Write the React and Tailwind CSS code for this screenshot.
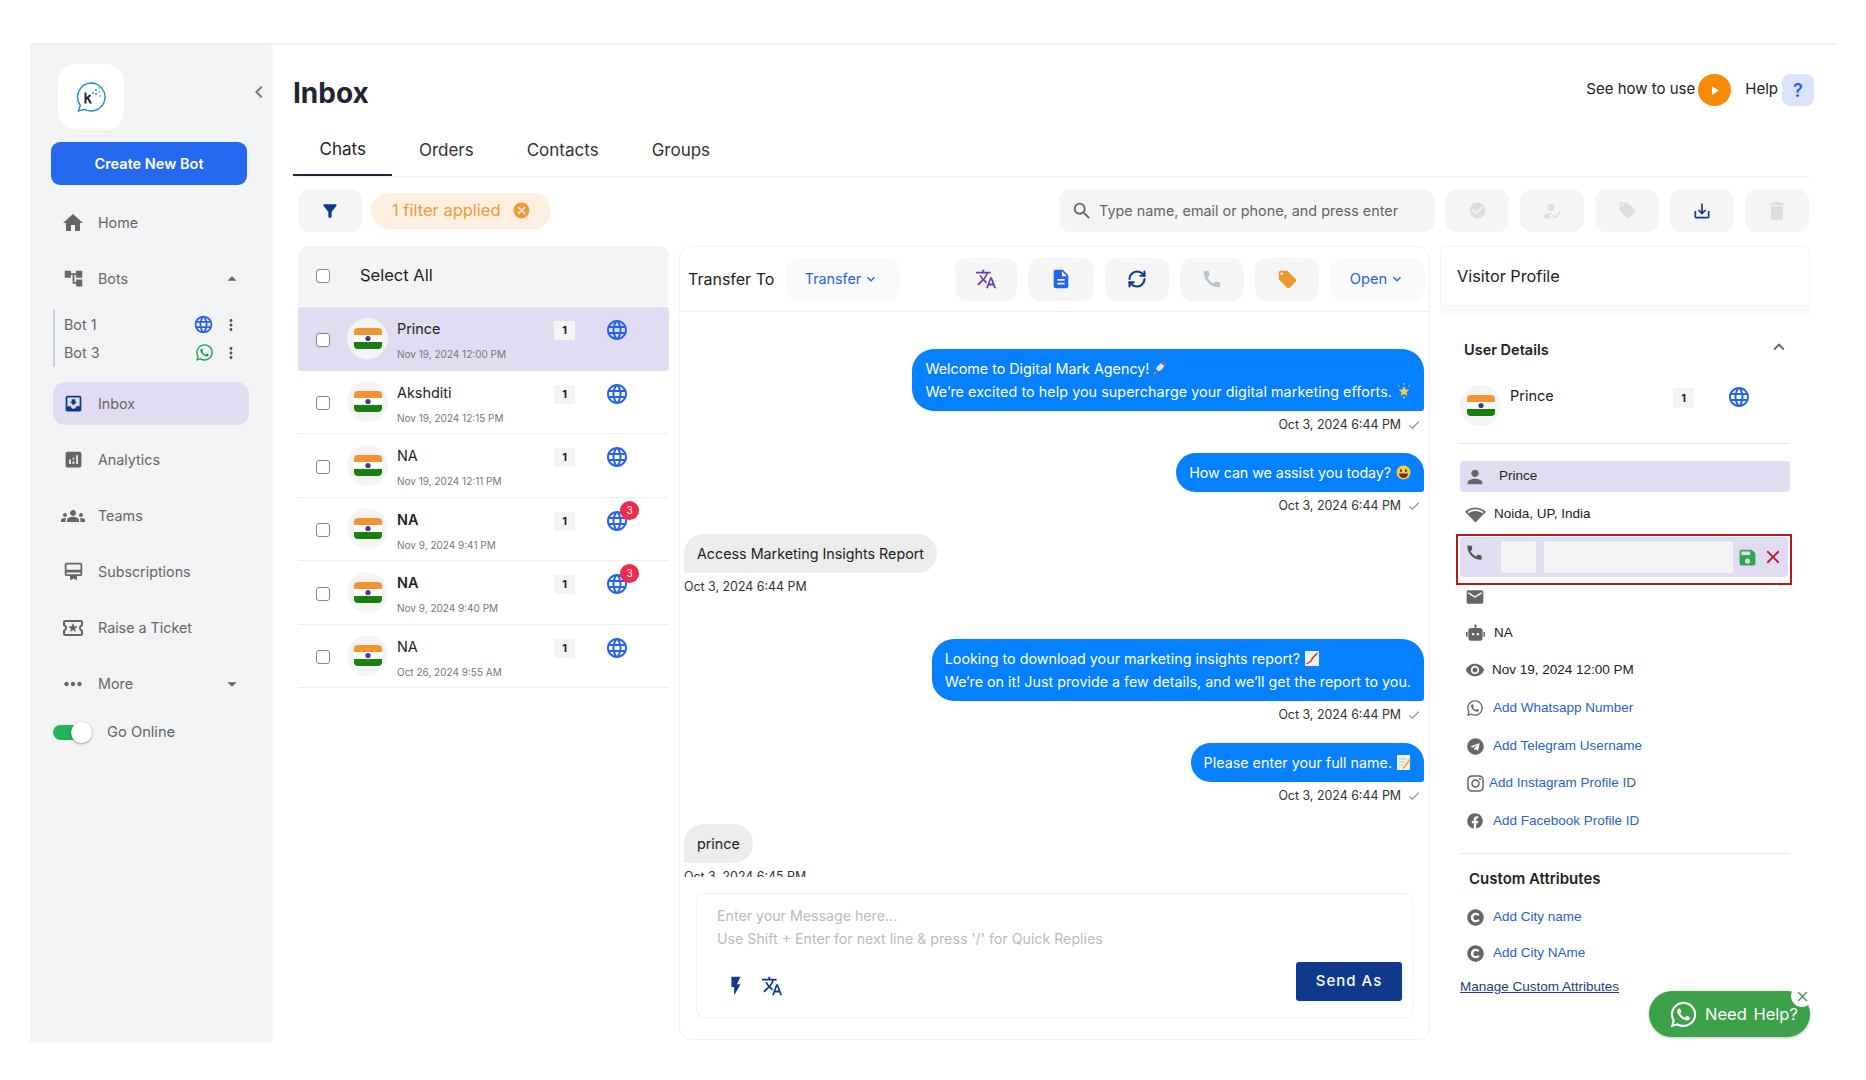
import React from 'react';
import {
  MdHome, MdAccountTree, MdArrowDropUp, MdArrowDropDown, MdLanguage, MdMoreVert, MdMoveToInbox, MdAnalytics,
  MdGroups, MdCardMembership, MdOutlineLocalActivity, MdMoreHoriz, MdChevronLeft, MdFilterAlt, MdCancel, MdSearch,
  MdCheckCircle, MdHowToReg, MdLocalOffer, MdSaveAlt, MdDelete, MdTranslate, MdDescription, MdCall,
  MdExpandMore, MdExpandLess, MdCheck, MdFlashOn, MdPerson, MdNetworkWifi, MdSave, MdClose, MdEmail,
  MdVisibility, MdPlayArrow,
} from 'react-icons/md';
import { FaWhatsapp, FaTelegram, FaInstagram, FaFacebook, FaCopyright } from 'react-icons/fa';
import { RiRobot2Fill } from 'react-icons/ri';
import { RefreshCw } from 'lucide-react';

function Flag() {
  return (
    <span className="w-[41px] h-[41px] rounded-full bg-[#f4f4f4] flex items-center justify-center shrink-0">
      <svg width="28" height="21" viewBox="0 0 28 21">
        <rect width="28" height="21" rx="4" fill="#fff" />
        <path d="M0 7V4a4 4 0 0 1 4-4h20a4 4 0 0 1 4 4v3z" fill="#f59331" />
        <path d="M0 14v3a4 4 0 0 0 4 4h20a4 4 0 0 0 4-4v-3z" fill="#17800f" />
        <circle cx="14" cy="10.5" r="2.6" fill="#3a3a9a" />
      </svg>
    </span>
  );
}

function Logo() {
  return (
    <svg width="32" height="32" viewBox="0 0 32 32" fill="none">
      <path d="M16 2a14 14 0 1 1-6.500 26.400L3.500 30l1.800-5.800A14 14 0 0 1 16 2z" stroke="#1f8fd6" strokeWidth="1.500" />
      <path d="M10.500 11.500v11M11 18l4.500-4M12.500 16.500l3.500 6" stroke="#1f2937" strokeWidth="2" />
      <g fill="#1f8fd6">
        <circle cx="18" cy="12" r="1" /><circle cx="21" cy="9" r="1" /><circle cx="24" cy="7" r=".8" />
        <circle cx="21" cy="13" r="1" /><circle cx="24" cy="11" r=".8" /><circle cx="25" cy="15" r=".8" />
      </g>
    </svg>
  );
}

function Rocket() {
  return (
    <svg width="14" height="15" viewBox="0 0 14 15" className="inline-block align-[-2px] ml-[3px]">
      <path d="M13 1C9 1.500 5.500 4 4 8l2.500 2.500C10.500 9 12.500 5.500 13 1z" fill="#dfe3ea" />
      <path d="M13 1c-1.500.2-2.700.6-3.800 1.200l2.600 2.600C12.400 3.700 12.800 2.500 13 1z" fill="#d8332c" />
      <path d="M4 8 1.500 9l2 .5zM6.500 10.500 5.500 13l-.5-2z" fill="#d8332c" />
      <path d="M3.500 10.500 1 14l3.500-2z" fill="#f5a623" />
    </svg>
  );
}

function Star() {
  return (
    <svg width="14" height="16" viewBox="0 0 14 16" className="inline-block align-[-2px] ml-[5px]">
      <path d="M7 3l1.600 3.400 3.600.4-2.700 2.400.8 3.600L7 11l-3.300 1.800.8-3.600L1.800 6.800l3.600-.4z" fill="#f7c948" />
      <path d="M7 0v2M1 2l1.500 1.500M13 2l-1.500 1.500M7 13v3" stroke="#e8dca8" strokeWidth="1" />
    </svg>
  );
}

function Smile() {
  return (
    <svg width="15" height="15" viewBox="0 0 15 15" className="inline-block align-[-2px] ml-[5px]">
      <circle cx="7.500" cy="7.500" r="7" fill="#f7c84a" />
      <ellipse cx="5" cy="5.500" rx="1" ry="1.500" fill="#5b3a12" />
      <ellipse cx="10" cy="5.500" rx="1" ry="1.500" fill="#5b3a12" />
      <path d="M3 8.500h9a4.500 4.500 0 0 1-9 0z" fill="#5b3a12" />
    </svg>
  );
}

function ChartEmoji() {
  return (
    <svg width="14" height="15" viewBox="0 0 14 15" className="inline-block align-[-2px] ml-[5px]">
      <rect width="14" height="15" fill="#eef1f5" />
      <path d="M1.500 13 6 10l1.500-3L12.500 2" stroke="#d8332c" strokeWidth="1.500" fill="none" />
    </svg>
  );
}

function Memo() {
  return (
    <svg width="14" height="15" viewBox="0 0 14 15" className="inline-block align-[-2px] ml-[5px]">
      <rect width="13" height="15" fill="#f2f2e8" />
      <path d="M2 4h8M2 7h6M2 10h4" stroke="#b8c2cf" />
      <path d="M13 3 6 12l-1 2.500L7.500 13 14 5z" fill="#e8b53a" />
    </svg>
  );
}

function NavItem({ icon, children, active, arrow, mt = 'mt-[13px]' }) {
  return (
    <div className={`w-[196px] h-[43px] ${mt} ml-[23px] rounded-[12px] flex items-center gap-[5px] pr-[6px] text-[14.300px] text-[#666] ${active ? 'bg-[#e2dcf3]' : ''}`}>
      <span className="w-[40px] flex justify-center">{icon}</span>
      <span className="flex-1">{children}</span>
      {arrow}
    </div>
  );
}

function BotRow({ name, icon }) {
  return (
    <div className="h-[28px] flex items-center pl-[9px] pr-[9px] text-[14.300px] text-[#666]">
      <span className="flex-1">{name}</span>
      {icon}
      <MdMoreVert size={18} className="ml-[8px] text-[#555]" />
    </div>
  );
}

function Sidebar() {
  return (
    <aside className="relative w-[240px] h-full bg-[#f2f3f5] shadow-[2px_0_3px_rgba(0,0,0,0.06)] shrink-0">
      <MdChevronLeft size={24} className="absolute left-[217px] top-[35px] text-[#777]" />
      <div className="w-[66px] h-[66px] mt-[19px] ml-[28px] bg-white rounded-[18px] flex items-center justify-center">
        <Logo />
      </div>
      <div className="w-[196px] h-[43px] mt-[12px] ml-[21px] bg-[#2469ef] rounded-[9px] flex items-center justify-center text-white text-[14.500px] font-semibold">
        Create New Bot
      </div>
      <NavItem mt="mt-[16px]" icon={<MdHome size={24} />}>Home</NavItem>
      <NavItem icon={<MdAccountTree size={21} />} arrow={<MdArrowDropUp size={22} />}>Bots</NavItem>
      <div className="w-[196px] h-[57px] mt-[10px] ml-[23px] border-l-2 border-[#c8cfe2] flex flex-col justify-center">
        <BotRow name="Bot 1" icon={<MdLanguage size={21} className="text-[#2563eb]" />} />
        <BotRow name="Bot 3" icon={<FaWhatsapp size={19} className="text-[#1f9d55]" />} />
      </div>
      <NavItem mt="mt-[15px]" active icon={<MdMoveToInbox size={21} className="text-[#0f3a8c]" />}>Inbox</NavItem>
      <NavItem icon={<MdAnalytics size={21} />}>Analytics</NavItem>
      <NavItem icon={<MdGroups size={24} />}>Teams</NavItem>
      <NavItem icon={<MdCardMembership size={21} />}>Subscriptions</NavItem>
      <NavItem icon={<MdOutlineLocalActivity size={24} />}>Raise a Ticket</NavItem>
      <NavItem icon={<MdMoreHoriz size={26} />} arrow={<MdArrowDropDown size={22} />}>More</NavItem>
      <div className="mt-[16px] ml-[23px] h-[22px] flex items-center">
        <span className="relative w-[33px] h-[15px] rounded-full bg-[#22b455]">
          <span className="absolute left-[18px] top-[-3px] w-[21px] h-[21px] rounded-full bg-white shadow-[0_1px_3px_rgba(0,0,0,0.35)]" />
        </span>
        <span className="ml-[21px] text-[14.700px] text-[#666]">Go Online</span>
      </div>
    </aside>
  );
}

function IconBtn({ icon, w = 'w-[64px]' }) {
  return <div className={`${w} h-[43px] rounded-[12px] bg-[#f5f5f5] flex items-center justify-center`}>{icon}</div>;
}

const contacts = [
  { name: 'Prince', time: 'Nov 19, 2024 12:00 PM', active: true },
  { name: 'Akshditi', time: 'Nov 19, 2024 12:15 PM' },
  { name: 'NA', time: 'Nov 19, 2024 12:11 PM' },
  { name: 'NA', time: 'Nov 9, 2024 9:41 PM', bold: true, unread: 3 },
  { name: 'NA', time: 'Nov 9, 2024 9:40 PM', bold: true, unread: 3 },
  { name: 'NA', time: 'Oct 26, 2024 9:55 AM' },
];

function Check({ cls = '' }) {
  return <span className={`w-[14px] h-[14px] rounded-[3px] border border-[#888] bg-white shrink-0 ${cls}`} />;
}

function ContactRow({ c }) {
  return (
    <div className={`relative h-[63.500px] flex items-center pl-[18px] ${c.active ? 'bg-[#e2dcf3] rounded-[3px]' : 'border-b border-[#eee]'}`}>
      <Check cls="mt-[3px]" />
      <span className="ml-[17px]"><Flag /></span>
      <div className="ml-[9px] w-[157px] self-start pt-[11px]">
        <div className={`text-[14.400px] leading-[22px] text-[#222] ${c.bold ? 'font-semibold' : ''}`}>{c.name}</div>
        <div className="mt-[6px] text-[10px] leading-[16px] text-[#777]">{c.time}</div>
      </div>
      <span className="self-start mt-[14px] w-[21px] h-[19px] bg-[#f4f4f4] flex items-center justify-center text-[11px] font-bold text-[#222]">1</span>
      <span className="relative self-start mt-[11px] ml-[30px]">
        <MdLanguage size={24} className="text-[#2563eb]" />
        {c.unread && (
          <span className="absolute left-[15px] top-[-8px] w-[19px] h-[19px] rounded-full bg-[#ee2a4e] text-white text-[10px] flex items-center justify-center">{c.unread}</span>
        )}
      </span>
    </div>
  );
}

function ContactList() {
  return (
    <section className="w-[371px] ml-[5px] shrink-0 self-start">
      <div className="h-[60px] bg-[#f4f4f4] rounded-t-[10px] flex items-center pl-[18px] pb-[1px] text-[16.500px] text-[#222] mb-[1px]">
        <Check />
        <span className="ml-[30px]">Select All</span>
      </div>
      {contacts.map((c, i) => <ContactRow key={i} c={c} />)}
    </section>
  );
}

function Sent({ children, mt }) {
  return (
    <div className={`flex flex-col items-end ${mt}`}>
      <div className="bg-[#0580ff] text-white text-[14.300px] leading-[23px] rounded-[22px] rounded-br-[3px] px-[13px] py-[8px]">{children}</div>
      <div className="mt-[3px] h-[22px] flex items-center gap-[6px] pr-[3px] text-[12.400px] text-[#333]">
        Oct 3, 2024 6:44 PM
        <MdCheck size={14} className="text-[#888]" />
      </div>
    </div>
  );
}

function Received({ children, time, mt }) {
  return (
    <div className={`flex flex-col items-start ${mt}`}>
      <div className="bg-[#ececec] text-[#222] text-[14.300px] leading-[23px] rounded-[20px] rounded-bl-[3px] px-[13px] py-[8px]">{children}</div>
      <div className="mt-[3px] h-[22px] flex items-center text-[12.400px] text-[#333]">{time}</div>
    </div>
  );
}

function ChatPanel() {
  return (
    <section className="w-[751px] h-[794px] ml-[10px] shrink-0 border border-[#f1f1f1] rounded-[12px] flex flex-col">
      <header className="h-[65px] shrink-0 border-b border-[#eee] flex items-center pl-[8px] pr-[4px] text-[16px]">
        <span className="w-[98px] text-[#222]">Transfer To</span>
        <div className="w-[114px] h-[43px] rounded-[12px] bg-[#fafafa] flex items-center justify-center gap-[2px] pr-[2px] text-[14.300px] text-[#2563eb]">
          Transfer <MdExpandMore size={16} />
        </div>
        <div className="ml-[55px] flex items-center gap-[11px]">
          <IconBtn w="w-[62px]" icon={<MdTranslate size={22} className="text-[#6b3fa8]" />} />
          <IconBtn w="w-[66px]" icon={<MdDescription size={22} className="text-[#2563eb]" />} />
          <IconBtn icon={<RefreshCw size={20} strokeWidth={2.5} className="text-[#0f3a8c]" />} />
          <IconBtn icon={<MdCall size={22} className="text-[#b9c3d6]" />} />
          <IconBtn icon={<MdLocalOffer size={21} className="text-[#f0962e]" />} />
          <div className="w-[95px] h-[43px] rounded-[12px] bg-[#fafafa] flex items-center justify-center gap-[2px] text-[14.700px] text-[#2563eb]">
            Open <MdExpandMore size={16} />
          </div>
        </div>
      </header>
      <div className="h-[565px] shrink-0 overflow-hidden pl-[4px] pr-[5px]">
        <Sent mt="mt-[37px]">
          <div>Welcome to Digital Mark Agency!<Rocket /></div>
          <div className="tracking-[0.07px]">We’re excited to help you supercharge your digital marketing efforts.<Star /></div>
        </Sent>
        <Sent mt="mt-[17px]"><span className="tracking-[-0.08px]">How can we assist you today?</span><Smile /></Sent>
        <Received mt="mt-[17px]" time="Oct 3, 2024 6:44 PM">Access Marketing Insights Report</Received>
        <Sent mt="mt-[41px]">
          <div>Looking to download your marketing insights report?<ChartEmoji /></div>
          <div>We’re on it! Just provide a few details, and we’ll get the report to you.</div>
        </Sent>
        <Sent mt="mt-[17px]">Please enter your full name.<Memo /></Sent>
        <Received mt="mt-[17px]" time="Oct 3, 2024 6:45 PM">prince</Received>
      </div>
      <div className="mt-[16px] mx-[16px] h-[125px] shrink-0 border border-[#efefef] rounded-[8px] px-[20px] pt-[10px] flex flex-col">
        <div className="text-[14.200px] leading-[23px] text-[#bbb]">
          <div>Enter your Message here...</div>
          <div>Use Shift + Enter for next line &amp; press '/' for Quick Replies</div>
        </div>
        <div className="flex items-center justify-between mt-[12px] -mr-[10px]">
          <div className="flex items-center gap-[14px] pl-[8px] pt-[8px]">
            <MdFlashOn size={22} className="text-[#0f3a8c]" />
            <MdTranslate size={22} className="text-[#0f3a8c]" />
          </div>
          <div className="w-[106px] h-[39px] rounded-[3px] bg-[#0f3a8c] text-white text-[15px] tracking-[1px] font-medium flex items-center justify-center">Send As</div>
        </div>
      </div>
    </section>
  );
}

function InfoRow({ icon, children, mt, gap = 'ml-[4px]', cls = 'text-[#222]' }) {
  return (
    <div className={`${mt} h-[24px] flex items-center text-[13.500px] [font-family:'Liberation_Sans',sans-serif]`}>
      <span className="w-[30px] flex justify-center text-[#666]">{icon}</span>
      <span className={`${gap} ${cls}`}>{children}</span>
    </div>
  );
}

function VisitorPanel() {
  const link = 'text-[#2563c9]';
  return (
    <section className="w-[370px] ml-[10px] shrink-0 h-[792px] flex flex-col">
      <div className="h-[60px] border border-[#f3f3f3] rounded-t-[6px] flex items-center pl-[16px] text-[16.300px] text-[#222]">Visitor Profile</div>
      <div className="h-[9px] bg-[#fafafa]" />
      <div className="flex-1 px-[20px] pt-[23px]">
        <div className="h-[24px] flex items-center justify-between pl-[4px] pr-[-1px] text-[14.500px] font-semibold text-[#222]">
          User Details
          <MdExpandLess size={22} className="text-[#666] -mt-[6px]" />
        </div>
        <div className="mt-[23px] h-[41px] flex items-start">
          <Flag />
          <span className="ml-[9px] w-[163px] text-[14.500px] leading-[22px] text-[#222]">Prince</span>
          <span className="mt-[3px] w-[21px] h-[20px] bg-[#f4f4f4] flex items-center justify-center text-[11px] font-bold text-[#222]">1</span>
          <MdLanguage size={24} className="ml-[33px] text-[#2563eb]" />
        </div>
        <div className="mt-[17px] h-px bg-[#e6e6e6]" />
        <div className="mt-[17px] h-[31px] rounded-[4px] bg-[#e2dcf3] flex items-center text-[13.500px] text-[#222] [font-family:'Liberation_Sans',sans-serif]">
          <span className="w-[30px] flex justify-center text-[#666]"><MdPerson size={22} /></span>
          <span className="ml-[9px]">Prince</span>
        </div>
        <InfoRow mt="mt-[10px]" icon={<MdNetworkWifi size={21} />}>Noida, UP, India</InfoRow>
        <div className="mt-[8px] -ml-[4px] -mr-[2px] h-[51px] border-2 border-[#b01c1c] px-[2px] pt-[1px]">
          <div className="h-[40px] bg-[#e2dcf3] rounded-[3px] flex items-center pl-[5px]">
            <MdCall size={19} className="text-[#555] self-start mt-[6px]" />
            <span className="ml-[17px] w-[35px] h-[32px] bg-[#f2f3f5] rounded-[3px]" />
            <span className="ml-[8px] w-[189px] h-[32px] bg-[#f2f3f5] rounded-[3px]" />
            <MdSave size={21} className="ml-[4px] text-[#2fa84f]" />
            <MdClose size={22} className="ml-[4px] text-[#b01c3c]" />
          </div>
        </div>
        <InfoRow mt="mt-0" icon={<MdEmail size={20} />} />
        <InfoRow mt="mt-[12px]" icon={<RiRobot2Fill size={19} />}>NA</InfoRow>
        <InfoRow mt="mt-[13px]" gap="ml-[2px]" icon={<MdVisibility size={20} />}>Nov 19, 2024 12:00 PM</InfoRow>
        <InfoRow mt="mt-[14px]" gap="ml-[3px]" cls={link} icon={<FaWhatsapp size={18} />}>Add Whatsapp Number</InfoRow>
        <InfoRow mt="mt-[14px]" gap="ml-[3px]" cls={link} icon={<FaTelegram size={17} />}>Add Telegram Username</InfoRow>
        <InfoRow mt="mt-[13px]" gap="-ml-px" cls={link} icon={<FaInstagram size={19} />}>Add Instagram Profile ID</InfoRow>
        <InfoRow mt="mt-[14px]" gap="ml-[3px]" cls={link} icon={<FaFacebook size={16} />}>Add Facebook Profile ID</InfoRow>
        <div className="mt-[20px] h-px bg-[#e6e6e6]" />
        <div className="mt-[13px] h-[24px] pl-[9px] flex items-center text-[15px] font-semibold text-[#222]">Custom Attributes</div>
        <InfoRow mt="mt-[14px]" gap="ml-[3px]" cls={link} icon={<FaCopyright size={17} />}>Add City name</InfoRow>
        <InfoRow mt="mt-[12px]" gap="ml-[3px]" cls={link} icon={<FaCopyright size={17} />}>Add City NAme</InfoRow>
        <div className="mt-[10px] h-[24px] flex items-center text-[13.500px] text-[#1e3a8a] underline [font-family:'Liberation_Sans',sans-serif]">Manage Custom Attributes</div>
      </div>
    </section>
  );
}

export default function App() {
  return (
    <div className="relative w-[1866px] h-[1080px] overflow-hidden bg-white pt-[43px] pl-[30px] [font-family:Inter,sans-serif]">
      <div className="w-[1806px] h-[999px] border-t-2 border-[#fcefe0] flex">
        <Sidebar />
        <main className="flex-1 pl-[23px] pr-[26px]">
          <div className="h-[80px] flex justify-between -mr-[4px]">
            <h1 className="pt-[28px] text-[28px] leading-[40px] font-bold text-[#1f2430]">Inbox</h1>
            <div className="pt-[29px] flex items-start text-[15px] text-[#222]">
              <span className="leading-[30px]">See how to use</span>
              <span className="ml-[3px] w-[33px] h-[32px] rounded-full bg-[#f98a06] flex items-center justify-center"><MdPlayArrow size={15} className="text-white" /></span>
              <span className="ml-[14px] leading-[30px]">Help</span>
              <span className="ml-[4px] w-[32px] h-[32px] rounded-[8px] bg-[#dbe2fb] flex items-center justify-center text-[18px] font-semibold text-[#2563eb]">?</span>
            </div>
          </div>
          <nav className="h-[52px] border-b border-[#eee] flex text-[17px] text-[#333]">
            <div className="px-[26.500px] flex items-center border-b-2 border-[#1f2937] text-[#222]">Chats</div>
            <div className="px-[26.500px] flex items-center">Orders</div>
            <div className="px-[26.500px] flex items-center">Contacts</div>
            <div className="px-[26.500px] flex items-center">Groups</div>
          </nav>
          <div className="mt-[12px] h-[43px] flex items-center pl-[5px]">
            <IconBtn icon={<MdFilterAlt size={20} className="text-[#0f3a8c]" />} />
            <div className="ml-[9px] w-[180px] h-[36px] rounded-full bg-[#fdf0e0] flex items-center pl-[21px] text-[16.500px] text-[#ee9a3a]">
              1 filter applied
              <MdCancel size={19} className="ml-[11px]" />
            </div>
            <div className="ml-auto w-[376px] h-[43px] rounded-[12px] bg-[#f5f5f5] flex items-center pl-[12px] text-[14.400px] text-[#666]">
              <MdSearch size={22} className="mr-[6px]" />
              Type name, email or phone, and press enter
            </div>
            <div className="ml-[10px] flex gap-[11px] mr-px">
              <IconBtn icon={<MdCheckCircle size={19} className="text-[#ddd]" />} />
              <IconBtn icon={<MdHowToReg size={22} className="text-[#ddd]" />} />
              <IconBtn icon={<MdLocalOffer size={19} className="text-[#ddd]" />} />
              <IconBtn icon={<MdSaveAlt size={20} className="text-[#0f3a8c]" />} />
              <IconBtn icon={<MdDelete size={24} className="text-[#ddd]" />} />
            </div>
          </div>
          <div className="mt-[14px] flex">
            <ContactList />
            <ChatPanel />
            <VisitorPanel />
          </div>
        </main>
      </div>
      <div className="absolute left-[1649px] top-[991px] w-[161px] h-[46px] rounded-full bg-[#3da14a] shadow-[0_1px_3px_rgba(0,0,0,0.25)] flex items-center pl-[20px] text-white text-[16.500px]">
        <FaWhatsapp size={29} />
        <span className="ml-[7px] [word-spacing:2px]">Need Help?</span>
        <span className="absolute right-[-3px] top-[-6px] w-[22px] h-[22px] rounded-full bg-white flex items-center justify-center text-[#3da14a]"><MdClose size={17} /></span>
      </div>
    </div>
  );
}
